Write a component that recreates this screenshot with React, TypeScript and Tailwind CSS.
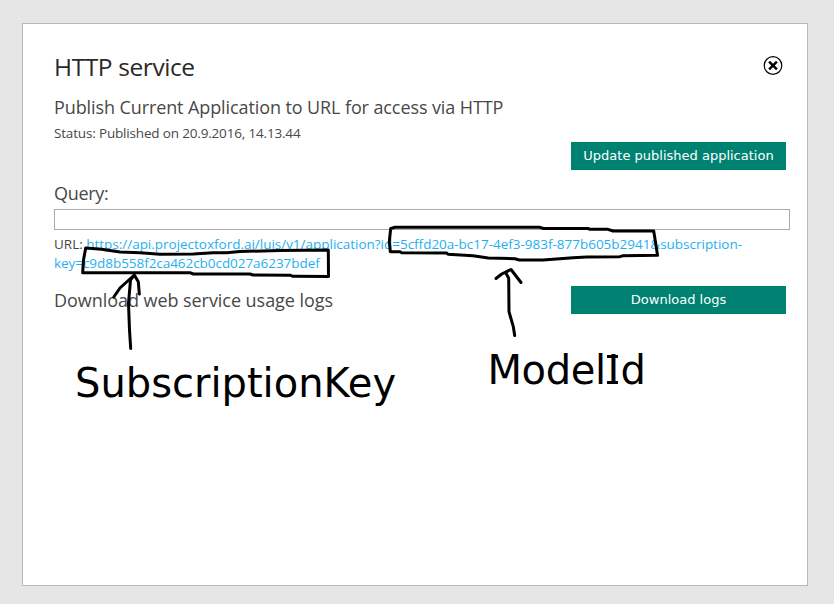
function ActionButton({ label }: { label: string }) {
  return (
    <button className="h-7 w-[215px] shrink-0 bg-[#008272] text-center font-['DejaVu_Sans',sans-serif] text-[13px] leading-7 whitespace-nowrap text-white">
      {label}
    </button>
  );
}

function CloseIcon() {
  return (
    <svg width="20" height="20" viewBox="0 0 20 20" fill="none" stroke="#000">
      <circle cx="10" cy="9.5" r="8.8" strokeWidth="1.2" />
      <path d="M6.1 5.6 L13.9 13.4 M13.9 5.6 L6.1 13.4" strokeWidth="2.5" />
    </svg>
  );
}

function InkMarks() {
  return (
    <svg
      className="pointer-events-none absolute top-0 left-0"
      width="834"
      height="604"
      viewBox="0 0 834 604"
      fill="none"
      stroke="#000"
      strokeWidth="3"
      strokeLinecap="round"
      strokeLinejoin="round"
    >
      <path d="M85.7 248 L101.7 249.3 L120 252 L140 252.7 L160 254.3 L193.3 254 L213 252.7 L226.7 252.7 L240 251.5 L280 250.5 L328.3 250 L328.5 276.5 L293 276.3 L290 275.2 L253 275 L250 274 L193.3 274 L190 272.7 L82.7 272.7 L83.5 260 Z" />
      <path d="M130.7 348.5 L129.5 330 L128.5 303.5 L130.5 280 L134.3 275 M113.8 297 L120 288 L134.3 275 L138.3 281.7 L139.3 294" />
      <path d="M390.7 228.5 L395 227.3 L540 227.3 L543.5 228.5 L588 228.5 L590 229.3 L608 229.3 L613 231 L653.7 231 L655.7 243.5 L657.5 255.3 L623 255.7 L620 256.7 L586.7 257 L573 257.7 L543 260 L519.3 260 L515 258.7 L488.3 258 L473 255.7 L448 254.3 L446.7 253 L401.7 252.7 L400 251.7 L390.3 251.7 L389.3 241.7 Z" />
      <path d="M514.7 335.5 L513.3 326.7 L509 311.7 L508.7 278.3 L506 273.3 M496 278.5 L501.7 274 L511 269.5 L521 282.5" />
    </svg>
  );
}

export default function App() {
  return (
    <div className="relative h-[604px] w-[834px] overflow-hidden bg-[#e6e6e6] pt-[23px] pl-[22px] font-['Open_Sans',sans-serif] text-[#484848]">
      <main className="flex h-[563px] w-[786px] flex-col border border-[#b8b8b8] bg-white pt-[26px] pr-[17px] pl-[31px]">
        <header className="flex h-[34px] justify-between">
          <h1 className="text-[24.5px] leading-[34px] font-normal tracking-[-0.4px] text-[#2a2a2a]">HTTP service</h1>
          <button aria-label="Close" className="mt-[6px] mr-[7px] h-5 w-5">
            <CloseIcon />
          </button>
        </header>

        <h2 className="mt-[9px] text-[18px] leading-7 font-normal tracking-[-0.1px]">
          Publish Current Application to URL for access via HTTP
        </h2>
        <p className="mt-[3px] text-[13.5px] leading-[18px] tracking-[-0.17px]">Status: Published on 20.9.2016, 14.13.44</p>
        <div className="flex justify-end pr-1">
          <ActionButton label="Update published application" />
        </div>

        <label htmlFor="query" className="mt-[9px] text-[18px] leading-7 font-normal tracking-[-0.3px]">
          Query:
        </label>
        <input id="query" className="mt-[2px] h-[21px] w-full shrink-0 border border-[#ababab] bg-white outline-none" />
        <p className="mt-[5px] text-[13.5px] leading-[19px] tracking-[-0.015px] whitespace-nowrap">
          URL:{" "}
          <a className="text-[#1fb0f0]">
            https://api.projectoxford.ai/luis/v1/application?id=5cffd20a-bc17-4ef3-983f-877b605b2941&amp;subscription-
            <br />
            <span className="tracking-[-0.05px]">key=c9d8b558f2ca462cb0cd027a6237bdef</span>
          </a>
        </p>

        <div className="mt-[13px] flex justify-between pr-1">
          <h2 className="text-[18px] leading-7 font-normal tracking-[-0.05px]">Download web service usage logs</h2>
          <ActionButton label="Download logs" />
        </div>
      </main>

      <InkMarks />
      <span className="absolute top-[363px] left-[75px] font-['DejaVu_Sans',sans-serif] text-[40px] leading-10 text-black">
        SubscriptionKey
      </span>
      <span className="absolute top-[350px] left-[487.5px] font-['DejaVu_Sans',sans-serif] text-[40px] leading-10 tracking-[-0.4px] whitespace-nowrap text-black">
        Model
        <span className="relative inline-block w-[15px] text-center before:absolute before:top-[5px] before:left-[1.5px] before:h-[3px] before:w-[11px] before:bg-black after:absolute after:top-[31px] after:left-[1.5px] after:h-[3px] after:w-[11px] after:bg-black">
          I
        </span>
        d
      </span>
    </div>
  );
}
